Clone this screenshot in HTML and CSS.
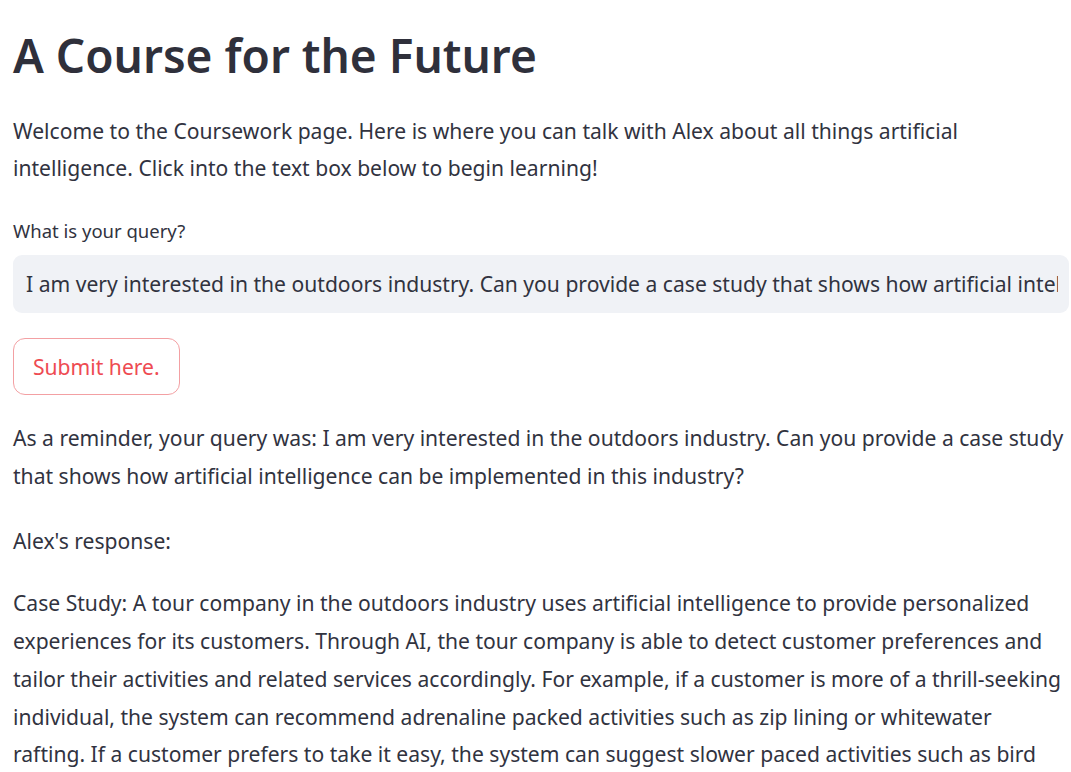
FILE: index.html
```html
<!DOCTYPE html>
<html lang="en">
<head>
<meta charset="utf-8">
<title>A Course for the Future</title>
<link rel="stylesheet" href="styles.css">
</head>
<body>
<main class="page">
  <h1 class="title">A Course for the Future</h1>
  <p class="text intro">Welcome to the Coursework page. Here is where you can talk with Alex about all things artificial intelligence. Click into the text box below to begin learning!</p>
  <div class="field">
    <label class="field-label" for="query">What is your query?</label>
    <input class="field-input" id="query" type="text" value="I am very interested in the outdoors industry. Can you provide a case study that shows how artificial intelligence can be implemented in this industry?">
  </div>
  <div class="actions">
    <button class="btn" type="button">Submit here.</button>
  </div>
  <p class="text reminder">As a reminder, your query was: I am very interested in the outdoors industry. Can you provide a case study that shows how artificial intelligence can be implemented in this industry?</p>
  <p class="text response-label">Alex's response:</p>
  <p class="text">Case Study: A tour company in the outdoors industry uses artificial intelligence to provide personalized experiences for its customers. Through AI, the tour company is able to detect customer preferences and tailor their activities and related services accordingly. For example, if a customer is more of a thrill-seeking individual, the system can recommend adrenaline packed activities such as zip lining or whitewater rafting. If a customer prefers to take it easy, the system can suggest slower paced activities such as bird watching or nature walks.</p>
</main>
</body>
</html>
```
FILE: styles.css
```css
html, body {
  margin: 0;
  padding: 0;
  background: #ffffff;
}

body {
  font-family: "Noto Sans", "Open Sans", sans-serif;
  color: #31333f;
  overflow: hidden;
}

.page {
  display: flex;
  flex-direction: column;
  gap: 24px;
  padding: 27px 2px 0 13px;
}

.title {
  margin: 0 0 3px 0;
  font-size: 46px;
  line-height: 57.6px;
  font-weight: 600;
  color: #2f303b;
  letter-spacing: 0;
}

.text {
  margin: 0;
  padding-right: 3px;
  font-size: 21.1px;
  line-height: 37.8px;
  font-weight: 400;
}

.intro {
  margin-bottom: 4px;
}

.reminder {
  margin-bottom: 4px;
}

.field {
  display: flex;
  flex-direction: column;
  gap: 8px;
}

.field-label {
  font-size: 18.5px;
  line-height: 31.7px;
  color: #31333f;
}

.field-input {
  box-sizing: border-box;
  width: 100%;
  height: 58px;
  margin: 0;
  padding: 0 11px 0 13px;
  border: none;
  border-radius: 9px;
  background: #f0f2f6;
  font-family: "Noto Sans", "Open Sans", sans-serif;
  font-size: 21.1px;
  color: #31333f;
  outline: none;
}

.actions {
  display: flex;
  margin-top: 1px;
}

.btn {
  box-sizing: border-box;
  height: 57px;
  padding: 0 19px;
  border: 1px solid #f3a0a3;
  border-radius: 12px;
  background: #ffffff;
  font-family: "Noto Sans", "Open Sans", sans-serif;
  font-size: 21.1px;
  color: #ee4b52;
  cursor: pointer;
}
```
